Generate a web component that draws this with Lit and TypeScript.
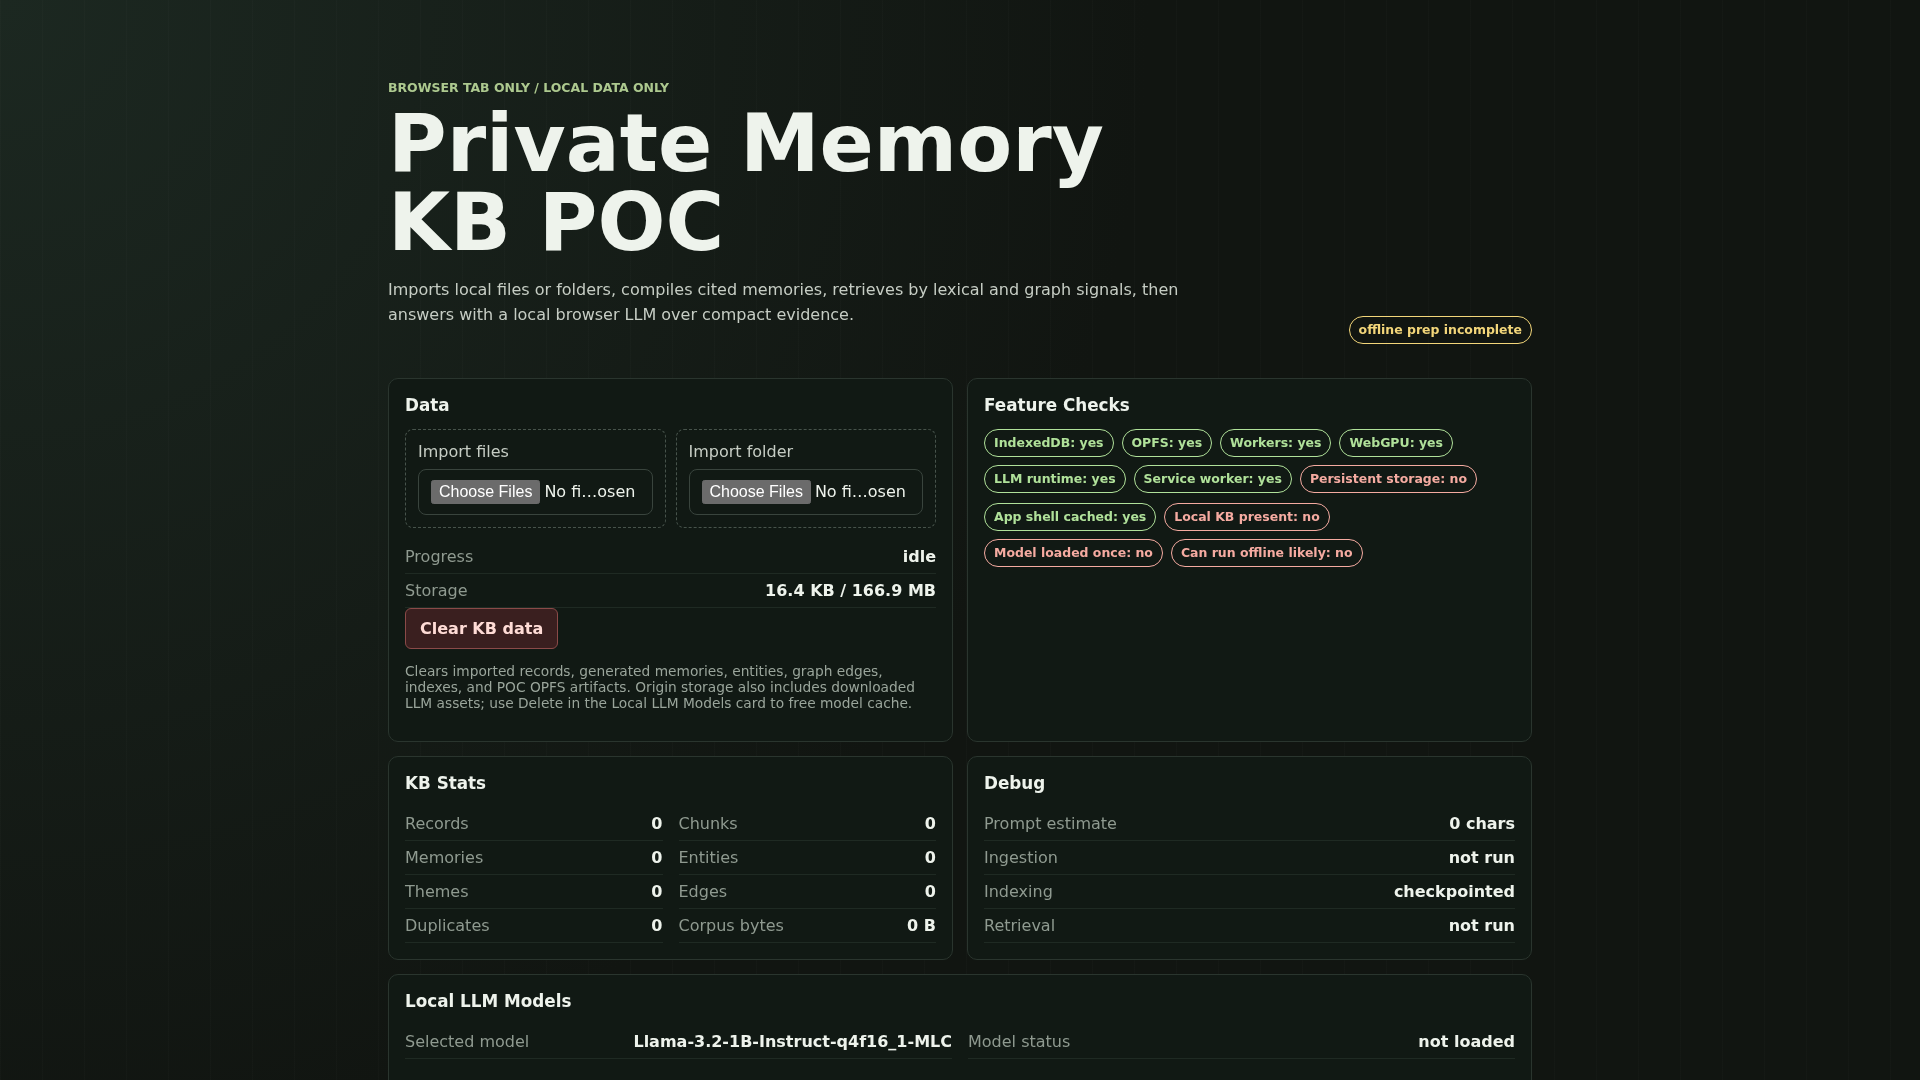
import { LitElement, html, css } from "lit";
import { customElement } from "lit/decorators.js";

type Row = [string, string];

@customElement("stat-rows")
class StatRows extends LitElement {
  static properties = { rows: { attribute: false } };
  rows: Row[] = [];
  static styles = css`
    :host { display: block; }
    .row {
      display: flex;
      justify-content: space-between;
      gap: 12px;
      padding: 6px 0;
      height: 34px;
      box-sizing: border-box;
      line-height: 21px;
      border-bottom: 1px solid #1f2a23;
    }
    .k { color: #8f9a90; }
    .v { color: #eef3ec; font-weight: 700; white-space: nowrap; }
  `;
  render() {
    return this.rows.map(([k, v]) => html`<div class="row"><span class="k">${k}</span><span class="v">${v}</span></div>`);
  }
}

@customElement("app-root")
class AppRoot extends LitElement {
  static styles = css`
    :host {
      display: block;
      height: 1080px;
      overflow: hidden;
      color-scheme: dark;
      color: #eef3ec;
      font-family: "DejaVu Sans", sans-serif;
      font-size: 16px;
      background:
        repeating-linear-gradient(90deg, rgba(255,255,255,0.016) 0 1px, transparent 1px 42px),
        radial-gradient(circle 1150px at 0 0, #1c2821 0, #111511 100%);
    }
    main { width: 1144px; margin: 0 auto; padding-top: 80px; will-change: transform; }
    .head { display: flex; justify-content: space-between; align-items: flex-end; gap: 16px; margin-bottom: 34px; }
    .eyebrow { font-size: 12.48px; line-height: 15px; font-weight: 700; color: #adc98f; margin: 0 0 9px; text-transform: uppercase; }
    h1 { margin: 0; font-size: 80px; line-height: 79px; font-weight: 700; color: #eef3ec; max-width: 800px; }
    .lede { margin: 15px 0 17px; max-width: 800px; line-height: 25px; color: #c6cdc4; }
    .pill {
      display: inline-block;
      box-sizing: border-box;
      border: 1px solid currentColor;
      border-radius: 999px;
      padding: 0 9px;
      height: 28px;
      line-height: 25px;
      font-size: 12.48px;
      font-weight: 700;
      white-space: nowrap;
    }
    .warn { color: #f3d67a; }
    .ok { color: #b0e19a; }
    .bad { color: #f5aba1; }
    .grid { display: grid; grid-template-columns: 1fr 1fr; gap: 14px; }
    .card {
      box-sizing: border-box;
      border: 1px solid #2a352e;
      border-radius: 10px;
      padding: 16px;
      background: #111914;
    }
    .wide { grid-column: 1 / -1; min-height: 220px; }
    h2 { margin: 0 0 14px; font-size: 16.8px; line-height: 20px; font-weight: 700; color: #eef3ec; }
    .imports { display: grid; grid-template-columns: 1fr 1fr; gap: 10px; margin-bottom: 12px; }
    .drop { border: 1px dashed #47534b; border-radius: 8px; padding: 12px; color: #c6cdc4; }
    .drop span { display: block; line-height: 19px; margin-bottom: 8px; }
    input[type="file"] {
      box-sizing: border-box;
      display: block;
      width: 100%;
      font: inherit;
      color: #eef3ec;
      padding: 10px 12px;
      border: 1px solid #39443d;
      border-radius: 8px;
      background: #111914;
    }
    .danger {
      display: block;
      height: 41px;
      box-sizing: border-box;
      padding: 0 14px;
      font: inherit;
      font-weight: 700;
      color: #ffdcd6;
      background: #3a1f1f;
      border: 1px solid #8a4a48;
      border-radius: 6px;
    }
    .note { font-size: 13.76px; line-height: 16px; color: #9aa59b; margin: 14px 0; }
    .pills { display: flex; flex-direction: column; gap: 8px; }
    .pill-row { display: flex; gap: 8px; }
    .pill-row.step { margin-top: 2px; }
    .two { display: grid; grid-template-columns: 1fr 1fr; gap: 0 16px; }
  `;
  render() {
    return html`<main>
      <header class="head">
        <div>
          <p class="eyebrow">Browser tab only / local data only</p>
          <h1>Private Memory KB POC</h1>
          <p class="lede">Imports local files or folders, compiles cited memories, retrieves by lexical and graph signals, then answers with a local browser LLM over compact evidence.</p>
        </div>
        <span class="pill warn">offline prep incomplete</span>
      </header>
      <div class="grid">
        <section class="card">
          <h2>Data</h2>
          <div class="imports">
            <label class="drop"><span>Import files</span><input type="file" multiple /></label>
            <label class="drop"><span>Import folder</span><input type="file" multiple /></label>
          </div>
          <stat-rows .rows=${[["Progress","idle"],["Storage","16.4 KB / 166.9 MB"]]}></stat-rows>
          <button class="danger">Clear KB data</button>
          <p class="note">Clears imported records, generated memories, entities, graph edges, indexes, and POC OPFS artifacts. Origin storage also includes downloaded LLM assets; use Delete in the Local LLM Models card to free model cache.</p>
        </section>
        <section class="card">
          <h2>Feature Checks</h2>
          <div class="pills">
            <div class="pill-row">
              <span class="pill ok">IndexedDB: yes</span>
              <span class="pill ok">OPFS: yes</span>
              <span class="pill ok">Workers: yes</span>
              <span class="pill ok">WebGPU: yes</span>
            </div>
            <div class="pill-row">
              <span class="pill ok">LLM runtime: yes</span>
              <span class="pill ok">Service worker: yes</span>
              <span class="pill bad">Persistent storage: no</span>
            </div>
            <div class="pill-row step">
              <span class="pill ok">App shell cached: yes</span>
              <span class="pill bad">Local KB present: no</span>
            </div>
            <div class="pill-row">
              <span class="pill bad">Model loaded once: no</span>
              <span class="pill bad">Can run offline likely: no</span>
            </div>
          </div>
        </section>
        <section class="card">
          <h2>KB Stats</h2>
          <div class="two">
            <stat-rows .rows=${[["Records","0"],["Memories","0"],["Themes","0"],["Duplicates","0"]]}></stat-rows>
            <stat-rows .rows=${[["Chunks","0"],["Entities","0"],["Edges","0"],["Corpus bytes","0 B"]]}></stat-rows>
          </div>
        </section>
        <section class="card">
          <h2>Debug</h2>
          <stat-rows .rows=${[["Prompt estimate","0 chars"],["Ingestion","not run"],["Indexing","checkpointed"],["Retrieval","not run"]]}></stat-rows>
        </section>
        <section class="card wide">
          <h2>Local LLM Models</h2>
          <div class="two">
            <stat-rows .rows=${[["Selected model","Llama-3.2-1B-Instruct-q4f16_1-MLC"]]}></stat-rows>
            <stat-rows .rows=${[["Model status","not loaded"]]}></stat-rows>
          </div>
        </section>
      </div>
    </main>`;
  }
}
